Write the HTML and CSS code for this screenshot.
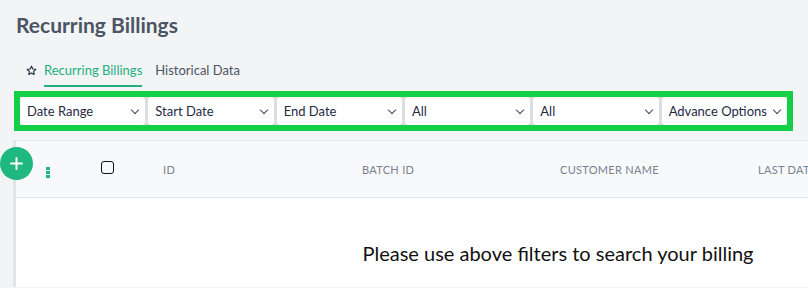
FILE: index.html
```html
<!DOCTYPE html>
<html lang="en">
<head>
  <meta charset="UTF-8" />
  <title>Recurring Billings</title>
  <link rel="stylesheet" href="styles.css">
</head>
<body>

<h1 class="title">Recurring Billings</h1>

<div class="tabs">
  <svg class="star" width="11" height="11" viewBox="0 0 24 24" fill="none" stroke="#1f2a44" stroke-width="2.4" stroke-linejoin="round">
    <path d="M12 2.5l2.9 6.1 6.6.8-4.9 4.6 1.3 6.6L12 17.3l-5.9 3.3 1.3-6.6-4.9-4.6 6.6-.8z"/>
  </svg>
  <div class="tab active">Recurring Billings</div>
  <div class="tab">Historical Data</div>
</div>

<div class="filters">
  <div class="select">Date Range <span class="chev"></span></div>
  <div class="select">Start Date <span class="chev"></span></div>
  <div class="select">End Date <span class="chev"></span></div>
  <div class="select">All <span class="chev"></span></div>
  <div class="select">All <span class="chev"></span></div>
  <div class="select">Advance Options <span class="chev"></span></div>
</div>

<div class="table-card">
  <button class="add-btn">
    <svg width="13" height="13" viewBox="0 0 13 13" stroke="#ffffff" stroke-width="2" stroke-linecap="round">
      <path d="M6.5 1v11M1 6.5h11"/>
    </svg>
  </button>
  <div class="table-head">
    <div class="dots"><i></i><i></i><i></i></div>
    <div><span class="checkbox"></span></div>
    <div>ID</div>
    <div>Batch ID</div>
    <div>Customer Name</div>
    <div class="last">Last Date</div>
  </div>
  <div class="empty">Please use above filters to search your billing</div>
</div>

</body>
</html>
```

FILE: styles.css
```css
body {
  margin: 0;
  background-color: #f3f4f6;
  font-family: Lato, "Open Sans", sans-serif;
  overflow: hidden;
  height: 288px;
}

.title {
  margin: 0;
  padding: 12px 0 0 16px;
  font-size: 21px;
  font-weight: 700;
  color: #4b5563;
  line-height: 26px;
}

.tabs {
  display: flex;
  align-items: center;
  margin: 22px 0 0 26px;
  height: 28px;
}

.star {
  margin-right: 7px;
  margin-top: -8px;
}

.tab {
  font-size: 13px;
  color: #4b5563;
  padding: 1px 0 7px 0;
  margin-right: 13px;
  border-bottom: 2px solid transparent;
}

.tab.active {
  color: #22b07d;
  border-bottom-color: #22b07d;
}

.filters {
  display: flex;
  gap: 3px;
  margin: 3px 0 0 14px;
  width: 767px;
  border: 6px solid #12cf45;
  background-color: #dcdee2;
}

.select {
  flex: 1;
  height: 28px;
  display: flex;
  align-items: center;
  justify-content: space-between;
  padding: 0 7px 0 7px;
  background-color: #ffffff;
  border-radius: 4px;
  font-size: 13px;
  color: #1f2a44;
}

.chev {
  width: 5px;
  height: 5px;
  border-right: 1.3px solid #3b4a6b;
  border-bottom: 1.3px solid #3b4a6b;
  transform: rotate(45deg);
  margin-top: -3px;
}

.table-card {
  position: relative;
  margin: 9px 0 0 13px;
  width: 1084px;
  background-color: #ffffff;
  border-left: 3px solid #e4e5e8;
  border-top: 1px solid #e4e5e8;
  height: 146px;
}

.add-btn {
  position: absolute;
  left: -16px;
  top: 6px;
  width: 33px;
  height: 33px;
  border-radius: 50%;
  border: none;
  background-color: #1fb880;
  padding: 0;
  display: flex;
  align-items: center;
  justify-content: center;
}

.table-head {
  display: grid;
  grid-template-columns: 55px 62px 199px 198px 198px 198px;
  align-items: center;
  height: 56px;
  padding-left: 30px;
  background-color: #f8f9fb;
  border-bottom: 1px solid #e1e3e7;
  font-size: 11px;
  color: #7b8190;
  text-transform: uppercase;
  letter-spacing: 0.3px;
}

.last {
  white-space: nowrap;
}

.dots {
  display: flex;
  flex-direction: column;
  gap: 1px;
  margin-top: 7px;
}

.dots i {
  width: 4px;
  height: 3px;
  background-color: #1fb880;
}

.checkbox {
  display: block;
  width: 11px;
  height: 11px;
  border: 1.5px solid #111111;
  border-radius: 3px;
  margin-top: -4px;
}

.empty {
  text-align: center;
  font-size: 20px;
  color: #111111;
  padding-top: 43px;
}
```
